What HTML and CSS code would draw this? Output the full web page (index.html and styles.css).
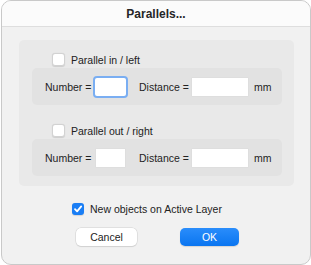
FILE: index.html
```html
<!DOCTYPE html>
<html lang="en">
<head>
  <meta charset="UTF-8" />
  <title>Parallels...</title>
  <link rel="stylesheet" href="styles.css">
</head>
<body>
  <div class="window">
    <div class="titlebar">Parallels...</div>

    <div class="content">
      <div class="group">
        <div class="check-row">
          <span class="check"></span>
          <span>Parallel in / left</span>
        </div>
        <div class="field-box">
          <span class="label num-label">Number =</span>
          <span class="input num-input focused"></span>
          <span class="label dist-label">Distance =</span>
          <span class="input dist-input"></span>
          <span class="unit">mm</span>
        </div>

        <div class="check-row second">
          <span class="check"></span>
          <span>Parallel out / right</span>
        </div>
        <div class="field-box">
          <span class="label num-label">Number =</span>
          <span class="input num-input"></span>
          <span class="label dist-label">Distance =</span>
          <span class="input dist-input"></span>
          <span class="unit">mm</span>
        </div>
      </div>

      <div class="check-row layer-row">
        <span class="check checked">
          <svg width="12" height="12" viewBox="0 0 12 12">
            <path d="M3 6.2 L5.1 8.4 L9.2 3.4" fill="none" stroke="#fff" stroke-width="1.8" stroke-linecap="round" stroke-linejoin="round"/>
          </svg>
        </span>
        <span>New objects on Active Layer</span>
      </div>

      <div class="buttons">
        <button class="btn">Cancel</button>
        <button class="btn primary">OK</button>
      </div>
    </div>
  </div>
</body>
</html>
```

FILE: styles.css
```css
body {
  margin: 0;
  font-family: "Liberation Sans", Arial, sans-serif;
  font-size: 10.5px;
  color: #222;
  background-color: #fff;
}

.window {
  margin-left: 1px;
  width: 308px;
  height: 263px;
  border: 1px solid #c9c9c9;
  border-radius: 10px;
  background-color: #f1f1f1;
  overflow: hidden;
}

.titlebar {
  height: 25px;
  line-height: 27px;
  background-color: #fbfbfb;
  border-bottom: 1px solid #dedede;
  text-align: center;
  font-weight: bold;
  font-size: 12px;
  color: #262626;
}

.content {
  padding: 13px 16px 0 17px;
}

.group {
  background-color: #e9e9e9;
  border-radius: 5px;
  padding: 11px 12px 10px 13px;
}

.check-row {
  display: flex;
  align-items: center;
  height: 17px;
  padding-left: 20px;
  gap: 6px;
}

.check-row.second {
  margin-top: 17px;
}

.check {
  width: 11px;
  height: 11px;
  background-color: #fff;
  border: 0.5px solid #d2d2d2;
  border-radius: 3px;
  box-shadow: 0 0.5px 1px rgba(0, 0, 0, 0.12);
  flex-shrink: 0;
}

.check.checked {
  width: 12px;
  height: 12px;
  border: none;
  background-color: #1a7ef5;
  display: flex;
  align-items: center;
  justify-content: center;
}

.field-box {
  display: flex;
  align-items: center;
  height: 37px;
  background-color: #e2e2e2;
  border-radius: 5px;
  padding-left: 13px;
}

.label {
  white-space: nowrap;
}

.num-label {
  width: 49px;
}

.dist-label {
  width: 53px;
  margin-left: 14px;
}

.input {
  height: 18px;
  background-color: #fff;
  box-shadow: 0 0 0 0.5px #dadada;
  box-sizing: border-box;
}

.num-input {
  width: 29px;
  margin-left: 2px;
}

.num-input.focused {
  width: 31px;
  margin-left: 1px;
  margin-right: -1px;
  border-radius: 2px;
  box-shadow: 0 0 0 2px #7aaef2;
}

.dist-input {
  width: 56px;
}

.unit {
  margin-left: 6px;
}

.layer-row {
  margin-top: 14px;
  padding-left: 53px;
}

.buttons {
  display: flex;
  gap: 43px;
  margin-top: 11px;
  padding-left: 57px;
}

.btn {
  width: 61px;
  height: 18px;
  padding: 0;
  border: none;
  border-radius: 5px;
  background-color: #fff;
  box-shadow: 0 0 0 0.5px #d0d0d0, 0 1px 1px rgba(0, 0, 0, 0.12);
  font-family: inherit;
  font-size: 10.5px;
  color: #222;
}

.btn.primary {
  width: 59px;
  background: linear-gradient(#2a8dfb, #0a75f0);
  box-shadow: 0 1px 1px rgba(0, 0, 0, 0.12);
  color: #fff;
}
```
